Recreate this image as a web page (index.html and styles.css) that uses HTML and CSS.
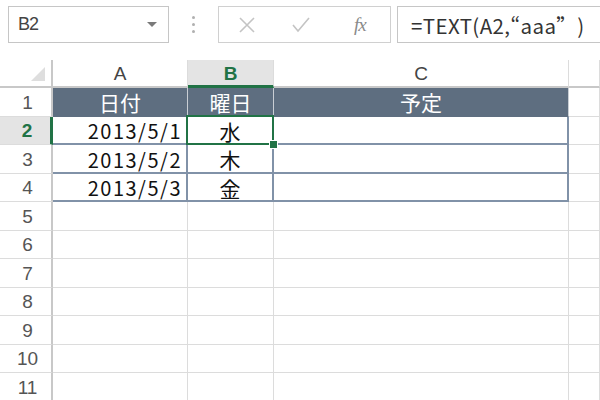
FILE: index.html
```html
<!DOCTYPE html>
<html lang="ja">
<head>
<meta charset="utf-8">
<link rel="stylesheet" href="styles.css">
</head>
<body>
<div class="page">
  <div class="fbar">
    <div class="namebox"><span class="nb-text">B2</span><span class="nb-arrow"></span></div>
    <div class="dots"><i></i><i></i><i></i></div>
    <div class="btns">
      <svg class="ic" width="18" height="18" viewBox="0 0 18 18"><path d="M2 2 L16 16 M16 2 L2 16" stroke="#c4c4c4" stroke-width="1.6" fill="none"/></svg>
      <svg class="ic" width="20" height="18" viewBox="0 0 20 18"><path d="M2 9 L7 15 L18 2" stroke="#c4c4c4" stroke-width="1.6" fill="none"/></svg>
      <span class="fx">fx</span>
    </div>
    <div class="finput">=TEXT(A2,“aaa<span class="fw">”</span>)</div>
  </div>
  <div class="sheet">
    <div class="c corner"><span class="tri"></span></div>
    <div class="c ch">A</div>
    <div class="c ch sel">B</div>
    <div class="c ch">C</div>
    <div class="c ch last"></div>

    <div class="c rh">1</div>
    <div class="c th">日付</div>
    <div class="c th">曜日</div>
    <div class="c th">予定</div>
    <div class="c g th-after"></div>

    <div class="c rh sel">2</div>
    <div class="c td num">2013/5/1</div>
    <div class="c td mid active">水<span class="selbox"></span><span class="handle"></span></div>
    <div class="c td"></div>
    <div class="c g"></div>

    <div class="c rh">3</div>
    <div class="c td num">2013/5/2</div>
    <div class="c td mid">木</div>
    <div class="c td"></div>
    <div class="c g"></div>

    <div class="c rh">4</div>
    <div class="c td num">2013/5/3</div>
    <div class="c td mid">金</div>
    <div class="c td"></div>
    <div class="c g"></div>

    <div class="c rh">5</div><div class="c g"></div><div class="c g"></div><div class="c g"></div><div class="c g"></div>
    <div class="c rh">6</div><div class="c g"></div><div class="c g"></div><div class="c g"></div><div class="c g"></div>
    <div class="c rh">7</div><div class="c g"></div><div class="c g"></div><div class="c g"></div><div class="c g"></div>
    <div class="c rh">8</div><div class="c g"></div><div class="c g"></div><div class="c g"></div><div class="c g"></div>
    <div class="c rh">9</div><div class="c g"></div><div class="c g"></div><div class="c g"></div><div class="c g"></div>
    <div class="c rh">10</div><div class="c g"></div><div class="c g"></div><div class="c g"></div><div class="c g"></div>
    <div class="c rh">11</div><div class="c g"></div><div class="c g"></div><div class="c g"></div><div class="c g"></div>
  </div>
</div>
</body>
</html>
```

FILE: styles.css
```css
html, body {
  margin: 0;
  padding: 0;
  background: #ffffff;
}
.page {
  width: 600px;
  height: 400px;
  overflow: hidden;
  font-family: "Liberation Sans", "Noto Sans CJK JP", sans-serif;
}
.fbar {
  display: flex;
  align-items: center;
  height: 37px;
  padding: 6px 0 0 8px;
}
.namebox {
  box-sizing: border-box;
  width: 161px;
  height: 37px;
  border: 1px solid #c6c6c6;
  display: flex;
  align-items: center;
  justify-content: space-between;
  padding: 0 11px 0 9px;
}
.nb-text {
  font-size: 18px;
  color: #444;
  letter-spacing: -1px;
}
.nb-arrow {
  width: 0;
  height: 0;
  border-left: 5px solid transparent;
  border-right: 5px solid transparent;
  border-top: 5px solid #7a7a7a;
}
.dots {
  width: 49px;
  display: flex;
  flex-direction: column;
  align-items: center;
  gap: 4px;
}
.dots i {
  display: block;
  width: 3px;
  height: 3px;
  border-radius: 50%;
  background: #b0b0b0;
}
.btns {
  width: 173px;
  height: 37px;
  box-sizing: border-box;
  border: 1px solid #d0d0d0;
  display: flex;
  align-items: center;
  padding-left: 19px;
  gap: 35px;
}
.fx {
  font-family: "Liberation Serif", serif;
  font-style: italic;
  font-size: 19px;
  color: #8a8a8a;
  margin-left: 8px;
  letter-spacing: -1px;
}
.finput {
  margin-left: 6px;
  flex: 1;
  height: 37px;
  box-sizing: border-box;
  border: 1px solid #c6c6c6;
  border-right: none;
  display: flex;
  align-items: center;
  padding-left: 13px;
  font-family: "Noto Sans CJK JP", sans-serif;
  font-size: 20.5px;
  color: #333;
  white-space: nowrap;
  letter-spacing: 0.4px;
}
.fw {
  font-feature-settings: "fwid" 1;
}
.sheet {
  margin-top: 17px;
  display: grid;
  grid-template-columns: 53px 135px 86px 295px 1fr;
  grid-template-rows: 28px repeat(11, 28.5px);
}
.c {
  position: relative;
  box-sizing: border-box;
  border-right: 1px solid #dcdcdc;
  border-bottom: 1px solid #dcdcdc;
  display: flex;
  align-items: center;
  justify-content: center;
}
.corner {
  border-right: 2px solid #c8c8c8;
  border-bottom: 2px solid #c8c8c8;
}
.tri {
  position: absolute;
  right: 6px;
  bottom: 5px;
  width: 0;
  height: 0;
  border-left: 14px solid transparent;
  border-bottom: 14px solid #dedede;
}
.ch {
  border-bottom: 2px solid #c8c8c8;
  font-size: 19px;
  color: #444;
  padding-top: 2px;
}
.ch.sel {
  background: #e4e4e4;
  color: #217346;
  font-weight: bold;
  border-bottom: 3px solid #217346;
}
.rh {
  border-right: 2px solid #c8c8c8;
  font-size: 19px;
  color: #555;
  padding-left: 4px;
  padding-top: 2px;
}
.rh.sel {
  background: #e4e4e4;
  color: #217346;
  font-weight: bold;
  border-right: 3px solid #217346;
}
.th {
  background: #5e6e80;
  color: #ffffff;
  font-family: "Noto Sans CJK JP", sans-serif;
  font-size: 21px;
  border-right: 1px solid #c9ced4;
  border-bottom: 1px solid #5e6e80;
}
.td {
  border-right: 2px solid #8192a8;
  border-bottom: 2px solid #8192a8;
  font-family: "Noto Sans CJK JP", sans-serif;
  font-size: 21px;
  color: #111;
  padding-top: 2px;
}
.num {
  justify-content: flex-end;
  padding-right: 4px;
  letter-spacing: 1.5px;
  font-size: 20px;
}
.mid {
  justify-content: center;
}
.selbox {
  position: absolute;
  left: -2px;
  top: -2px;
  right: -2px;
  bottom: -2px;
  border: 2px solid #217346;
}
.handle {
  position: absolute;
  right: -6px;
  bottom: -6px;
  width: 7px;
  height: 7px;
  background: #217346;
  border: 1px solid #ffffff;
  z-index: 2;
}
```
